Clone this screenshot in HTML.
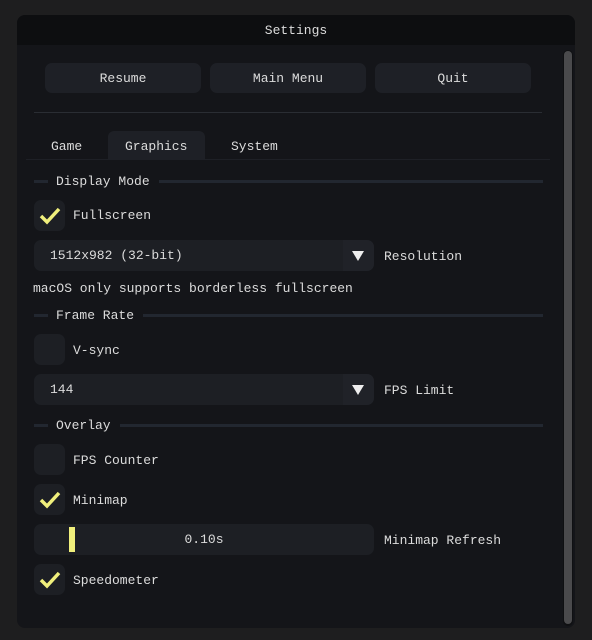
<!DOCTYPE html><html><head><style>
body{margin:0;width:592px;height:640px;background:#1e1e1f;font-family:"Liberation Mono",monospace;font-size:13px;color:#dcdcdc;overflow:hidden;position:relative}
.a{position:absolute}
.win{left:17px;top:15px;width:558px;height:613px;background:#141519;border-radius:8px;overflow:hidden}
.title{left:17px;top:15px;width:558px;height:30px;background:#0d0e10;border-radius:8px 8px 0 0;text-align:center;line-height:31px}
.btn{background:#1e2026;border-radius:7px;height:30px;line-height:31px;text-align:center;top:63px;width:156px}
.line{height:3px;background:#222730}
.cb{width:31px;height:31px;background:#1d1f24;border-radius:7px;left:34px}
.cb svg{position:absolute;left:5px;top:6px}
.lbl{line-height:16px;margin-top:1px}
.dd{left:34px;width:340px;height:31px;background:#1d1f24;border-radius:7px}
.dd span{position:absolute;left:16px;top:8px}
.dd i{position:absolute;right:0;top:0;width:31px;height:31px;background:#202228;border-radius:0 7px 7px 0}
.dd i:after{content:"";position:absolute;left:9px;top:11px;border-left:6px solid transparent;border-right:6px solid transparent;border-top:10px solid #eee}
</style></head><body>
<div class="a win"></div>
<div class="a title">Settings</div>
<div class="a" style="left:563px;top:50px;width:10px;height:576px;background:#0f1012;border-radius:5px"></div>
<div class="a" style="left:564px;top:51px;width:8px;height:573px;background:#4a4a4c;border-radius:4px"></div>
<div class="a btn" style="left:45px">Resume</div>
<div class="a btn" style="left:210px">Main Menu</div>
<div class="a btn" style="left:375px">Quit</div>
<div class="a" style="left:34px;top:112px;width:508px;height:1px;background:#2a2d33"></div>
<div class="a" style="left:108px;top:131px;width:97px;height:29px;background:#1e2026;border-radius:6px 6px 0 0"></div>
<div class="a" style="left:26px;top:159px;width:524px;height:1px;background:#1e2026"></div>
<div class="a lbl" style="left:51px;top:138px">Game</div>
<div class="a lbl" style="left:125px;top:138px">Graphics</div>
<div class="a lbl" style="left:231px;top:138px">System</div>

<div class="a line" style="left:34px;top:180px;width:14px"></div>
<div class="a lbl" style="left:56px;top:173px">Display Mode</div>
<div class="a line" style="left:159px;top:180px;width:384px"></div>
<div class="a cb" style="top:200px"><svg width="22" height="20"><path d="M2 10 L8 16 L20 3" stroke="#f0ef7c" stroke-width="3.5" fill="none"/></svg></div>
<div class="a lbl" style="left:73px;top:207px">Fullscreen</div>
<div class="a dd" style="top:240px"><span>1512x982 (32-bit)</span><i></i></div>
<div class="a lbl" style="left:384px;top:248px">Resolution</div>
<div class="a lbl" style="left:33px;top:280px">macOS only supports borderless fullscreen</div>

<div class="a line" style="left:34px;top:314px;width:14px"></div>
<div class="a lbl" style="left:56px;top:307px">Frame Rate</div>
<div class="a line" style="left:143px;top:314px;width:400px"></div>
<div class="a cb" style="top:334px"></div>
<div class="a lbl" style="left:73px;top:342px">V-sync</div>
<div class="a dd" style="top:374px"><span>144</span><i></i></div>
<div class="a lbl" style="left:384px;top:382px">FPS Limit</div>

<div class="a line" style="left:34px;top:424px;width:14px"></div>
<div class="a lbl" style="left:56px;top:417px">Overlay</div>
<div class="a line" style="left:120px;top:424px;width:423px"></div>
<div class="a cb" style="top:444px"></div>
<div class="a lbl" style="left:73px;top:452px">FPS Counter</div>
<div class="a cb" style="top:484px"><svg width="22" height="20"><path d="M2 10 L8 16 L20 3" stroke="#f0ef7c" stroke-width="3.5" fill="none"/></svg></div>
<div class="a lbl" style="left:73px;top:492px">Minimap</div>
<div class="a dd" style="top:524px;background:#1d1f24"><span style="left:0;width:340px;text-align:center">0.10s</span></div>
<div class="a" style="left:69px;top:527px;width:6px;height:25px;background:#f0ef7c"></div>
<div class="a lbl" style="left:384px;top:532px">Minimap Refresh</div>
<div class="a cb" style="top:564px"><svg width="22" height="20"><path d="M2 10 L8 16 L20 3" stroke="#f0ef7c" stroke-width="3.5" fill="none"/></svg></div>
<div class="a lbl" style="left:73px;top:572px">Speedometer</div>
</body></html>
